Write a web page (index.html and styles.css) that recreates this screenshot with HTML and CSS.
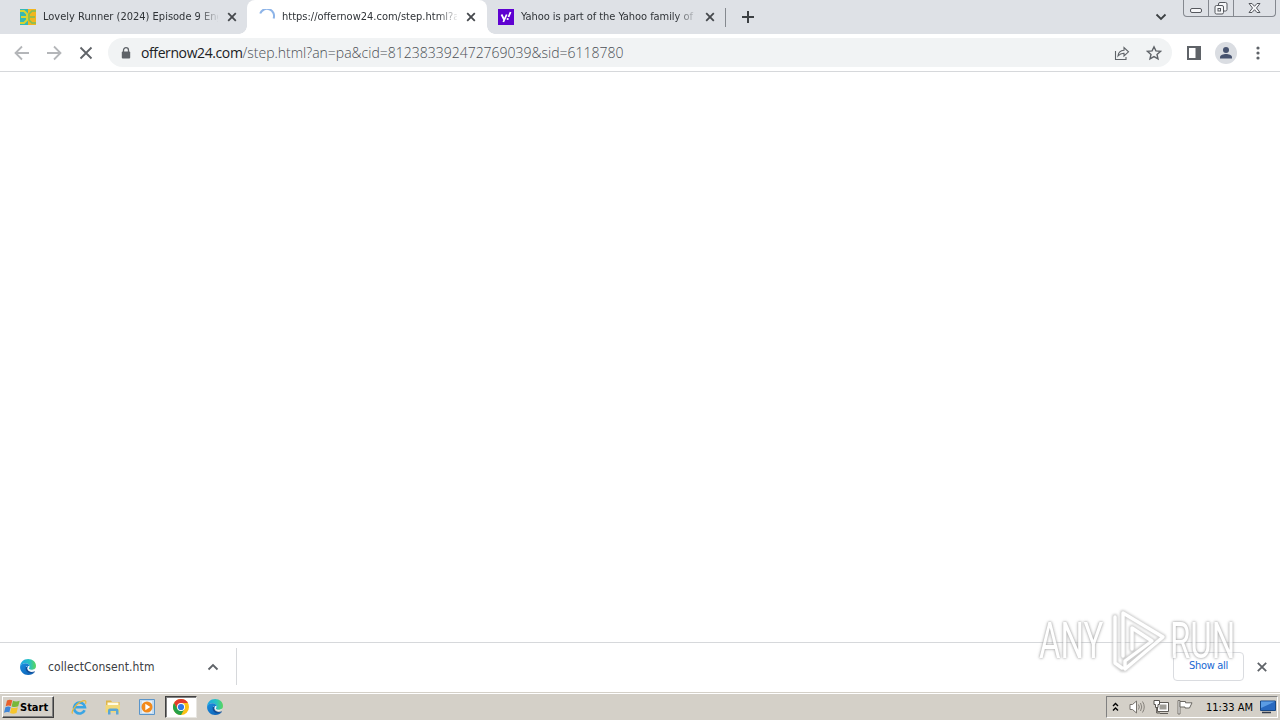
FILE: index.html
```html
<!DOCTYPE html>
<html lang="en">
    <head>
        <meta charset="utf-8">
        <title>offernow24.com</title>
        <link rel="stylesheet" href="styles.css">
    </head>
    <body>
        <!-- shared gradients and the edge logo, used twice -->
        <svg class="defs" width="0" height="0">
            <defs>
                <linearGradient id="edgeTop" x1="0" y1="0" x2="1" y2="0">
                    <stop offset="0" stop-color="#1ba5e8"/>
                    <stop offset=".6" stop-color="#29c3c0"/>
                    <stop offset="1" stop-color="#5bd65a"/>
                </linearGradient>
                <linearGradient id="edgeLow" x1="0" y1="0" x2="1" y2="1">
                    <stop offset="0" stop-color="#1a8fe0"/>
                    <stop offset="1" stop-color="#0c5bb0"/>
                </linearGradient>
            </defs>
            <symbol id="edge" viewBox="0 0 16 16">
                <path d="M.1 8C0 3.500 3.500 0 8.200 0 12.700 0 16 3.200 16 7c0 2.500-1.800 4-4.200 4-2 0-3-.7-3-1.400 0-.6.8-.9.8-2.200C9.600 5.700 8 4.200 5.500 4.200 2.900 4.200.9 5.500.1 8z" fill="url(#edgeTop)"/>
                <path d="M.1 7.600C1 5.400 3.200 4.200 5.500 4.200c2.500 0 4.100 1.500 4.100 3.200 0 1.300-.8 1.600-.8 2.200-1.500-.4-2-1.500-1.800-2.600C5.500 8 5.800 13.500 11 13.800c1.700 0 3-.4 4-1C13.300 14.900 10.900 16 8.100 16 3.500 16-.3 12.300.1 7.600z" fill="url(#edgeLow)"/>
                <path d="M5.800 8c-.8 3.600 1.700 6.500 5.600 6.100 1.400-.1 2.500-.6 3.400-1.200.3-.3 0-.7-.3-.5-3 1-5.600.4-6.800-1.600-.5-.9-.6-2-.4-2.800z" fill="#0f4c97"/>
                <path d="M8 7.200c.9-.6 1.700-.2 1.500.9-.3 1-.9 1.200-.5 1.800 1.200 1.300 4.500 1.300 6.200-.4-1.300 3.200-5.700 3.200-7.200.6-.5-1-.5-2.200 0-2.900z" fill="#eef8fc"/>
            </symbol>
        </svg>

        <header class="tabs">
            <div class="tab">
                <svg class="favicon" viewBox="0 0 16 16">
                    <path fill="#35b8b4" d="M0 0h8v16H0z"/>
                    <path fill="#f2b51e" d="M8 0h8v16H8z"/>
                    <path fill="none" stroke="#d5d432" stroke-width="2" d="M0 2h4l3 3v6l-3 3H0M1 8h5"/>
                    <path fill="none" stroke="#79c05c" stroke-width="1.600" d="M16 2h-4L9 5v6l3 3h4M15 8h-5"/>
                </svg>
                <span class="title title-lovely">Lovely Runner (2024) Episode 9 Eng Sub</span>
                <svg class="close" viewBox="0 0 10 10"><path d="M1.200 1.200l7.600 7.600M8.800 1.200L1.200 8.800"/></svg>
            </div>
            <div class="tab active">
                <svg class="favicon" viewBox="0 0 16 16"><path d="M1.200 4.500A7 7 0 0 1 14.600 9.500" fill="none" stroke="#8db4e8" stroke-width="2"/></svg>
                <span class="title title-step">https://offernow24.com/step.html?an=pa</span>
                <svg class="close" viewBox="0 0 10 10"><path d="M1.200 1.200l7.600 7.600M8.800 1.200L1.200 8.800"/></svg>
            </div>
            <div class="tab">
                <svg class="favicon" viewBox="0 0 16 16">
                    <path fill="#5f01d1" d="M0 0h16v16H0z"/>
                    <path fill="none" stroke="#fff" stroke-width="1.800" d="M3.500 5.500l2.500 5M8.700 5.500L5.300 13M12.600 3l-2.100 5"/>
                    <circle cx="9.700" cy="10" r="1.100" fill="#fff"/>
                </svg>
                <span class="title title-yahoo">Yahoo is part of the Yahoo family of brands</span>
                <svg class="close" viewBox="0 0 10 10"><path d="M1.200 1.200l7.600 7.600M8.800 1.200L1.200 8.800"/></svg>
            </div>
            <i class="divider"></i>
            <svg class="plus" viewBox="0 0 12 12"><path d="M6 0v12M0 6h12"/></svg>
            <svg class="search-tabs" viewBox="0 0 12 8"><path d="M1.500 1.500L6 6l4.500-4.500"/></svg>
            <div class="window-buttons">
                <span class="min"><svg width="12" height="16"><rect x=".5" y="8.500" width="11" height="4" rx="1.500"/></svg></span>
                <span class="max"><svg width="14" height="16"><path d="M4.500 5V4q0-1.500 1.500-1.500h5.500Q13 2.500 13 4v5.500q0 1.500-1.500 1.500H10"/><rect x="1" y="5.500" width="8.500" height="8.500" rx="1.500"/><rect x="4" y="8.500" width="2.500" height="2.500"/></svg></span>
                <span class="quit"><svg width="13" height="16"><path d="M1 3.500h3l2.500 2.800L9 3.500h3L8.500 8l3.500 4.500H9L6.500 9.700 4 12.500H1L4.500 8z"/></svg></span>
            </div>
        </header>

        <nav class="toolbar">
            <svg class="nav-icon faded" viewBox="0 0 16 16"><path d="M15 8H2M8 1.500L1.500 8 8 14.500"/></svg>
            <svg class="nav-icon faded" viewBox="0 0 16 16"><path d="M1 8h13M8 1.500L14.500 8 8 14.500"/></svg>
            <svg class="nav-icon" viewBox="0 0 16 16"><path d="M2.500 2.500l11 11M13.500 2.500l-11 11"/></svg>
            <div class="omnibox">
                <svg class="lock" viewBox="0 0 10 12"><path d="M2.500 5V3.200a2.500 2.500 0 0 1 5 0V5" fill="none" stroke="#5f6368" stroke-width="1.300"/><rect x=".8" y="4.500" width="8.400" height="7" rx="1" fill="#5f6368"/></svg>
                <span class="url"><b>offernow24.com</b><span>/step.html?an=pa&amp;cid=812383392472769039&amp;sid=6118780</span></span>
                <svg class="share" viewBox="0 0 16 16"><path d="M1.500 6v8.500H12V12M4 11c.4-3.700 2.500-5.500 6-5.700V2.500l4.500 4.300L10 11V8.300C7.500 8.200 5.700 9 4 11z"/></svg>
                <svg class="star" viewBox="0 0 16 16"><path d="M8 1.800l1.900 4.100 4.500.5L11 9.400l1 4.500L8 11.600 4 13.900l1-4.500L1.600 6.400l4.500-.5z"/></svg>
            </div>
            <svg class="panel" viewBox="0 0 14 14"><rect x="1" y="1" width="12" height="12"/><path d="M8.500 1H13v12H8.500z" fill="#5f6368" stroke="none"/></svg>
            <svg class="avatar" viewBox="0 0 22 22"><circle cx="11" cy="11" r="11" fill="#dadde2"/><circle cx="11" cy="7.900" r="3" fill="#47536f"/><path d="M5 16.500v-1.300c0-2.200 3.500-3.200 6-3.200s6 1 6 3.200v1.300z" fill="#47536f"/></svg>
            <svg class="kebab" viewBox="0 0 4 14"><circle cx="2" cy="2" r="1.600"/><circle cx="2" cy="7" r="1.600"/><circle cx="2" cy="12" r="1.600"/></svg>
        </nav>

        <main class="page"></main>

        <section class="downloads">
            <div class="download">
                <svg class="edge"><use href="#edge"/></svg>
                <span class="file">collectConsent.htm</span>
                <svg class="up" viewBox="0 0 12 8"><path d="M1.500 6.500L6 2l4.500 4.500"/></svg>
            </div>
            <button class="show-all"><span>Show all</span></button>
            <svg class="close-bar" viewBox="0 0 10 10"><path d="M.8.8l8.400 8.400M9.200.8L.8 9.200"/></svg>
        </section>

        <footer class="taskbar">
            <div class="start">
                <svg viewBox="0 0 16 16">
                    <path fill="#e8602c" d="M3 1.500c2-1.200 3.500-1 5.300-.2L6.900 7C5.200 6.200 3.500 6.300 1.700 7.200z"/>
                    <path fill="#78b83a" d="M9 1.800c2 .9 4.200 1 6.700-.1L14.200 7.300c-2.200 1-4.400 1-6.600.1z"/>
                    <path fill="#3f86d8" d="M1.400 8.200c2-1 3.500-1 5.300-.2l-1.400 5.600C3.500 12.800 2 13 0 13.800z"/>
                    <path fill="#f6c52c" d="M7.400 8.400c2.200.9 4.300.9 6.500-.1l-1.400 5.600c-2.200 1-4.300 1-6.500.1z"/>
                </svg>
                <span>Start</span>
            </div>
            <div class="launch">
                <svg viewBox="0 0 16 16">
                    <path d="M13.600 11.200A5.500 5.500 0 1 1 14 8.300H4.200" fill="none" stroke="#3aa5e4" stroke-width="2.600"/>
                    <path d="M1.600 14.500C-.5 12.500 6 3.500 12 1.800c3-.7 3.300.8 2.500 3" fill="none" stroke="#e9b93a" stroke-width="1.200"/>
                </svg>
            </div>
            <div class="launch">
                <svg viewBox="0 0 16 16">
                    <path d="M1 3V1.500h5L7 3h7.500v9H1z" fill="#dfb64a"/>
                    <path d="M2.500 3.500h11V9h-11z" fill="#fffbe2"/>
                    <path d="M.5 6h14.500v7.500H.5z" fill="#f2d877"/>
                    <path d="M3 15.500v-4Q3 9.500 5 9.500h6.500q2 0 2 2v4H11V12H5.500v3.500z" fill="#5aa6d6"/>
                </svg>
            </div>
            <div class="launch">
                <svg viewBox="0 0 16 16">
                    <path d="M.5.5h15v15H.5z" fill="#c5dcf0" stroke="#5a95ca"/>
                    <path d="M3 2h10v12H3z" fill="#e8f1f8"/>
                    <circle cx="8" cy="8" r="5.500" fill="#f28a1c"/>
                    <path d="M6.300 4.800L11.300 8l-5 3.200z" fill="#fff"/>
                </svg>
            </div>
            <div class="launch pressed">
                <svg viewBox="0 0 16 16">
                    <circle cx="8" cy="8" r="8" fill="#fbc116"/>
                    <path d="M8 4h6.930A8 8 0 0 0 1.070 4L4.500 10z" fill="#e33b2e"/>
                    <path d="M1.070 4A8 8 0 0 0 8 16l3.460-6L8 11 4.540 10z" fill="#26a148"/>
                    <circle cx="8" cy="8" r="4" fill="#fff"/>
                    <circle cx="8" cy="8" r="3.100" fill="#2f78e6"/>
                </svg>
            </div>
            <div class="launch">
                <svg><use href="#edge"/></svg>
            </div>
            <div class="tray">
                <svg class="chevrons" viewBox="0 0 7 10"><path d="M1 4l2.500-2.500L6 4M1 8.500L3.500 6 6 8.500"/></svg>
                <svg class="sound" viewBox="0 0 16 16"><path d="M1 5.500h2.500L7.500 2v12l-4-3.500H1z" fill="#fff" stroke="#77736d"/><path d="M9.500 5.500q1.600 2.500 0 5M11.500 4q2.500 4 0 8M13.500 2.500q3.500 5.500 0 11" fill="none" stroke="#85817b"/></svg>
                <svg class="network" viewBox="0 0 16 16"><path d="M4.500 3.500h11v9h-11z" fill="#fff" stroke="#5f5c57"/><path d="M6.500 5.500h7v5h-7z" fill="#a09e98"/><path d="M7 14.500h8" stroke="#5f5c57"/><path d="M1 1.500h5.500v4H5v3H2.500v-3H1z" fill="#fff" stroke="#55524d"/><path d="M3.700 8.500V14H7" fill="none" stroke="#55524d"/></svg>
                <svg class="flag" viewBox="0 0 16 16"><path d="M1 1.500h2V15H1z" fill="#fff" stroke="#77736d"/><path d="M3 2.500h5.500v1.300H15L12.500 9H8V8H3z" fill="#fff" stroke="#6b6863"/></svg>
                <span class="clock">11:33 AM</span>
                <svg class="desktop" viewBox="0 0 16 14"><path d="M.5 1h15v9.500H.5z" fill="#2869c0" stroke="#174783"/><path d="M1 1.500h14L1 8z" fill="#5b9ce4"/><path d="M2 12.500h9" stroke="#323b4b" stroke-width="1.500"/></svg>
            </div>
        </footer>

        <div class="watermark">
            <span>ANY</span>
            <svg viewBox="0 0 58 64">
                <path class="halo" d="M6 8v46l7 6M14 47V4l40 24-38 32v-8l27-20-20-13v21"/>
                <path class="line" d="M6 8v46l7 5M14 47V4l40 24-38 32v-8l27-20-20-13v21"/>
            </svg>
            <span>RUN</span>
        </div>
    </body>
</html>
```
FILE: styles.css
```css
html, body {
    height: 100%;
}
body {
    margin: 0;
    background: #fff;
    display: flex;
    flex-direction: column;
    overflow: hidden;
    position: relative;
    font-family: "DejaVu Sans Condensed", "DejaVu Sans", sans-serif;
    font-size: 11px;
    color: #3c4043;
}
svg {
    display: block;
    flex: none;
}
.defs {
    position: absolute;
}

/* tab strip */
.tabs {
    height: 34px;
    flex: none;
    display: flex;
    align-items: center;
    background: #dee1e6;
    padding-left: 8px;
}
.tab {
    box-sizing: border-box;
    width: 239px;
    height: 34px;
    padding: 0 10px 0 12px;
    display: flex;
    align-items: center;
}
.tab.active {
    background: #fff;
    border-radius: 8px 8px 0 0;
    width: 240px;
    margin-right: -1px;
    position: relative;
}
.tab.active:before, .tab.active:after {
    content: "";
    position: absolute;
    bottom: 0;
    width: 8px;
    height: 8px;
}
.tab.active:before {
    left: -8px;
    background: radial-gradient(circle at 0 0, transparent 7.5px, #fff 8px);
}
.tab.active:after {
    right: -8px;
    background: radial-gradient(circle at 100% 0, transparent 7.5px, #fff 8px);
}
.favicon {
    width: 16px;
    height: 16px;
}
.title {
    margin: 0 9px 0 7px;
    width: 175px;
    flex: none;
    overflow: hidden;
    white-space: nowrap;
    line-height: 18px;
    color: #2f3337;
    -webkit-mask-image: linear-gradient(90deg, #000 155px, transparent 177px);
    mask-image: linear-gradient(90deg, #000 155px, transparent 177px);
}
.title-yahoo {
    letter-spacing: -.06px;
}
.close {
    width: 10px;
    height: 10px;
}
.close path {
    stroke: #45484c;
    stroke-width: 1.8;
}
.divider {
    width: 1px;
    height: 19px;
    background: #85898f;
}
.plus {
    width: 12px;
    height: 12px;
    margin-left: 16px;
}
.plus path {
    stroke: #3c4043;
    stroke-width: 2;
}
.search-tabs {
    width: 12px;
    height: 8px;
    margin-left: auto;
    margin-right: 16px;
}
.search-tabs path {
    fill: none;
    stroke: #3c4043;
    stroke-width: 1.8;
}
.window-buttons {
    box-sizing: border-box;
    width: 93px;
    height: 17px;
    margin-right: 4px;
    align-self: flex-start;
    display: flex;
    border: 1px solid #84888f;
    border-top: 0;
    border-radius: 0 0 4px 4px;
}
.window-buttons span {
    display: flex;
    justify-content: center;
}
.window-buttons span + span {
    border-left: 1px solid #84888f;
}
.window-buttons .min, .window-buttons .max {
    width: 24px;
}
.window-buttons .quit {
    flex: 1;
}
.window-buttons svg * {
    fill: #f5f6f8;
    stroke: #55585e;
}

/* toolbar */
.toolbar {
    box-sizing: border-box;
    height: 38px;
    flex: none;
    display: flex;
    align-items: center;
    padding: 0 20px 0 14px;
    border-bottom: 1px solid #d6d8db;
}
.nav-icon {
    width: 16px;
    height: 16px;
    margin-right: 16px;
}
.nav-icon path {
    fill: none;
    stroke: #5f6368;
    stroke-width: 1.8;
}
.faded path {
    stroke: #b4b6b9;
}
.omnibox {
    box-sizing: border-box;
    flex: 1;
    height: 29px;
    margin-left: -2px;
    padding: 0 10px 0 13px;
    border-radius: 15px;
    background: #f1f3f4;
    display: flex;
    align-items: center;
}
.lock {
    width: 10px;
    height: 12px;
}
.url {
    margin-left: 10px;
    font-family: "Open Sans", sans-serif;
    font-size: 14px;
    font-weight: 300;
    color: #4b4f54;
    white-space: nowrap;
}
.url b {
    font-weight: 400;
    letter-spacing: -.4px;
    color: #202124;
}
.share {
    width: 16px;
    height: 16px;
    margin-left: auto;
}
.share path {
    fill: none;
    stroke: #5f6368;
    stroke-width: 1.1;
}
.star {
    width: 16px;
    height: 16px;
    margin-left: 16px;
}
.star path {
    fill: none;
    stroke: #5f6368;
    stroke-width: 1.4;
}
.panel {
    width: 14px;
    height: 14px;
    margin-left: 15px;
}
.panel rect {
    fill: none;
    stroke: #5f6368;
    stroke-width: 2;
}
.avatar {
    width: 22px;
    height: 22px;
    margin-left: 14px;
}
.kebab {
    width: 4px;
    height: 14px;
    margin-left: 19px;
    fill: #5f6368;
}

.page {
    flex: 1;
}

/* download shelf */
.downloads {
    box-sizing: border-box;
    height: 50px;
    flex: none;
    display: flex;
    align-items: center;
    padding: 0 13px 2px 0;
    border-top: 1px solid #d6d8db;
}
.download {
    box-sizing: border-box;
    width: 237px;
    height: 37px;
    padding: 0 17px 0 20px;
    border-right: 1px solid #d6d8db;
    display: flex;
    align-items: center;
}
.edge {
    width: 16px;
    height: 16px;
}
.file {
    margin-left: 12px;
    font-size: 12px;
    letter-spacing: .1px;
    white-space: nowrap;
}
.up {
    width: 12px;
    height: 8px;
    margin-left: auto;
}
.up path {
    fill: none;
    stroke: #5f6368;
    stroke-width: 1.8;
}
.show-all {
    width: 71px;
    height: 29px;
    margin: 0 13px 0 auto;
    padding: 0 0 2px;
    border: 1px solid #dadce0;
    border-radius: 4px;
    background: #fff;
    color: #1967d2;
    font: inherit;
    letter-spacing: -.3px;
}
.close-bar {
    width: 10px;
    height: 10px;
}
.close-bar path {
    stroke: #5f6368;
    stroke-width: 1.8;
}

/* windows taskbar */
.taskbar {
    box-sizing: border-box;
    height: 28px;
    flex: none;
    display: flex;
    align-items: center;
    background: #d4d0c8;
    border-top: 1px solid #d4d0c8;
    box-shadow: inset 0 1px #fff;
    padding: 1px 2px 0;
    color: #000;
}
.start {
    box-sizing: border-box;
    width: 52px;
    height: 22px;
    margin-right: 9px;
    display: flex;
    align-items: center;
    border: 1px solid;
    border-color: #fff #404040 #404040 #fff;
    box-shadow: inset -1px -1px #808080;
    font-weight: bold;
    white-space: nowrap;
}
.start svg {
    width: 16px;
    height: 16px;
    margin-left: 1px;
}
.launch {
    box-sizing: border-box;
    width: 32px;
    height: 22px;
    margin-right: 2px;
    display: flex;
    align-items: center;
    justify-content: center;
}
.launch svg {
    width: 16px;
    height: 16px;
}
.pressed {
    background: #fff;
    border: 1px solid;
    border-color: #404040 #e8e6e1 #e8e6e1 #404040;
    box-shadow: inset 1px 1px #808080;
}
.tray {
    box-sizing: border-box;
    width: 172px;
    height: 22px;
    margin-left: auto;
    padding-left: 5px;
    display: flex;
    align-items: center;
    border: 1px solid;
    border-color: #808080 #fff #fff #808080;
}
.chevrons {
    width: 7px;
    height: 10px;
}
.chevrons path {
    fill: none;
    stroke: #000;
    stroke-width: 1.4;
}
.sound, .network, .flag {
    width: 16px;
    height: 16px;
}
.sound {
    margin-left: 10px;
}
.network {
    margin-left: 8px;
}
.flag {
    margin-left: 8px;
}
.clock {
    margin-left: 13px;
    white-space: nowrap;
}
.desktop {
    width: 16px;
    height: 14px;
    margin-left: auto;
    margin-right: 1px;
}

/* logo laid over the lower right corner */
.watermark {
    position: absolute;
    left: 1039px;
    top: 609px;
    width: 194px;
    height: 64px;
    display: flex;
    align-items: center;
    justify-content: space-between;
    opacity: .75;
}
.watermark span {
    width: 63px;
    font-family: Roboto, sans-serif;
    font-size: 50px;
    line-height: 64px;
    color: #fff;
    transform: scaleX(.66);
    transform-origin: 0 50%;
    text-shadow: 0 0 3px #888, 0 0 4px #aaa;
}
.watermark svg {
    width: 58px;
    height: 64px;
    overflow: visible;
    margin-left: 3px;
}
.watermark path {
    fill: none;
    stroke-linejoin: round;
    stroke-linecap: round;
}
.halo {
    stroke: #bdbdbd;
    stroke-width: 6;
    filter: blur(1.2px);
}
.line {
    stroke: #fff;
    stroke-width: 3.4;
}
```
